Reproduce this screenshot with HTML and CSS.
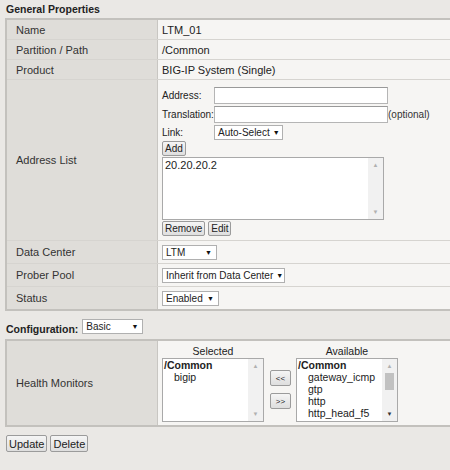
FILE: index.html
```html
<!DOCTYPE html>
<html lang="en">
<head>
    <meta charset="UTF-8">
    <title>LTM_01</title>
    <link rel="stylesheet" href="styles.css">
</head>
<body>
    <div class="section-title">General Properties</div>
    <table class="props">
        <tr>
            <td class="label">Name</td>
            <td class="value">LTM_01</td>
        </tr>
        <tr>
            <td class="label">Partition / Path</td>
            <td class="value">/Common</td>
        </tr>
        <tr>
            <td class="label">Product</td>
            <td class="value">BIG-IP System (Single)</td>
        </tr>
        <tr>
            <td class="label">Address List</td>
            <td class="value address-cell">
                <div class="addr-form">
                    <span>Address:</span>
                    <span class="input"></span>
                    <span></span>
                    <span>Translation:</span>
                    <span class="input"></span>
                    <span class="optional">(optional)</span>
                    <span>Link:</span>
                    <span><span class="select link-select">Auto-Select <i>▼</i></span></span>
                    <span></span>
                </div>
                <div class="btn-row"><span class="btn">Add</span></div>
                <div class="listbox addr-list">
                    <div class="list-items">20.20.20.2</div>
                    <div class="scroll"><i>▲</i><i>▼</i></div>
                </div>
                <div class="btn-row"><span class="btn">Remove</span><span class="btn">Edit</span></div>
            </td>
        </tr>
        <tr class="tall">
            <td class="label">Data Center</td>
            <td class="value"><span class="select dc-select">LTM <i>▼</i></span></td>
        </tr>
        <tr class="tall">
            <td class="label">Prober Pool</td>
            <td class="value"><span class="select pool-select">Inherit from Data Center <i>▼</i></span></td>
        </tr>
        <tr class="tall">
            <td class="label">Status</td>
            <td class="value"><span class="select status-select">Enabled <i>▼</i></span></td>
        </tr>
    </table>

    <div class="config-row">
        <span class="config-label">Configuration:</span>
        <span class="select config-select">Basic <i>▼</i></span>
    </div>

    <table class="props">
        <tr>
            <td class="label">Health Monitors</td>
            <td class="value monitors-cell">
                <div class="monitors">
                    <div class="mon-col">
                        <div class="mon-head">Selected</div>
                        <div class="listbox mon-list">
                            <div class="list-items">
                                <div class="group">/Common</div>
                                <div class="item">bigip</div>
                            </div>
                            <div class="scroll"><i>▲</i><i>▼</i></div>
                        </div>
                    </div>
                    <div class="mover">
                        <span class="btn small">&lt;&lt;</span>
                        <span class="btn small">&gt;&gt;</span>
                    </div>
                    <div class="mon-col">
                        <div class="mon-head">Available</div>
                        <div class="listbox mon-list">
                            <div class="list-items">
                                <div class="group">/Common</div>
                                <div class="item">gateway_icmp</div>
                                <div class="item">gtp</div>
                                <div class="item">http</div>
                                <div class="item">http_head_f5</div>
                            </div>
                            <div class="scroll active"><i>▲</i><b class="thumb"></b><i class="dark">▼</i></div>
                        </div>
                    </div>
                </div>
            </td>
        </tr>
    </table>

    <div class="actions">
        <span class="btn">Update</span>
        <span class="btn">Delete</span>
    </div>
</body>
</html>
```

FILE: styles.css
```css
body {
    margin: 0;
    width: 450px;
    height: 470px;
    overflow: hidden;
    background-color: #eae8e5;
    font-family: "Liberation Sans", Arial, sans-serif;
    font-size: 11px;
    color: #222;
}

.section-title {
    font-weight: bold;
    font-size: 10.5px;
    padding: 3px 0 0 6px;
    height: 15px;
}

.props {
    border-collapse: collapse;
    margin-left: 5px;
    width: 460px;
    border: 1px solid #c3c1bd;
    border-left-width: 2px;
    border-right: none;
}

.props td {
    border-top: 1px solid #d6d4d0;
    border-bottom: 1px solid #d6d4d0;
    padding: 0;
    height: 19px;
}

.props tr:first-child td {
    border-top: 2px solid #c3c1bd;
}

.props tr:last-child td {
    border-bottom: 2px solid #c3c1bd;
}

.label {
    width: 141px;
    padding-left: 9px !important;
    background-color: #dfddd9;
    color: #333;
    border-right: 1px solid #c8c6c2;
}

.value {
    background-color: #f6f5f3;
    padding-left: 4px !important;
}

.tall td {
    height: 22px;
}

.address-cell {
    padding: 7px 0 4px 4px !important;
    font-size: 10px;
}

.addr-form {
    display: grid;
    grid-template-columns: 52px 174px auto;
    row-gap: 2px;
    align-items: center;
    white-space: nowrap;
}

.input {
    height: 15px;
    background: #fff;
    border: 1px solid #b5b5b5;
    border-top-color: #999;
}

.optional {
    color: #333;
}

.select {
    box-sizing: border-box;
    display: inline-flex;
    align-items: center;
    justify-content: space-between;
    gap: 3px;
    height: 15px;
    padding: 0 4px 0 3px;
    background: #fff;
    border: 1px solid #b0b0b0;
    color: #222;
    font-size: 10px;
    white-space: nowrap;
    vertical-align: middle;
    overflow: hidden;
}

.select i {
    font-style: normal;
    font-size: 7px;
    color: #111;
}

.link-select {
    width: 69px;
}

.dc-select {
    width: 55px;
}

.pool-select {
    width: 123px;
}

.status-select {
    width: 57px;
}

.config-select {
    width: 61px;
    margin-left: 4px;
}

.btn-row {
    display: flex;
    gap: 3px;
    margin-top: 1px;
}

.btn {
    display: inline-flex;
    align-items: center;
    height: 13px;
    padding: 0 2px;
    border: 1px solid #9b9b9b;
    border-radius: 2px;
    background: linear-gradient(#f5f5f5, #dedede);
    color: #222;
}

.listbox {
    display: flex;
    background: #fff;
    border: 1px solid #a9a9a9;
}

.addr-list {
    width: 220px;
    height: 61px;
    margin-top: 1px;
    font-size: 11px;
}

.list-items {
    flex: 1;
    padding: 1px 2px;
}

.scroll {
    width: 15px;
    display: flex;
    flex-direction: column;
    justify-content: space-between;
    align-items: center;
    background: #f1f1f1;
}

.scroll i {
    font-style: normal;
    font-size: 6px;
    color: #b0b0b0;
    padding: 4px 0;
}

.scroll i.dark {
    color: #333;
}

.scroll.active {
    justify-content: flex-start;
}

.scroll.active .dark {
    margin-top: auto;
}

.thumb {
    width: 9px;
    height: 17px;
    background: #c1c1c1;
}

.config-row {
    display: flex;
    align-items: center;
    height: 17px;
    padding: 7px 0 4px 6px;
}

.config-label {
    font-weight: bold;
    font-size: 10.5px;
    margin-top: 4px;
}

.monitors-cell {
    padding: 4px 0 3px 4px !important;
    height: auto !important;
    font-size: 10.5px;
}

.monitors {
    display: flex;
    align-items: flex-start;
}

.mon-col {
    width: 102px;
}

.mon-head {
    text-align: center;
    height: 13px;
}

.mon-list {
    height: 62px;
}

.mon-list .list-items {
    padding: 0 1px;
    white-space: nowrap;
    overflow: hidden;
}

.group {
    font-weight: bold;
    line-height: 12px;
}

.item {
    padding-left: 10px;
    line-height: 12px;
}

.mover {
    display: flex;
    flex-direction: column;
    gap: 7px;
    padding: 25px 5px 0 6px;
}

.btn.small {
    font-size: 8px;
    width: 15px;
    height: 14px;
    justify-content: center;
}

.actions {
    display: flex;
    gap: 3px;
    padding: 8px 0 0 6px;
}

.actions .btn {
    height: 15px;
}
```
